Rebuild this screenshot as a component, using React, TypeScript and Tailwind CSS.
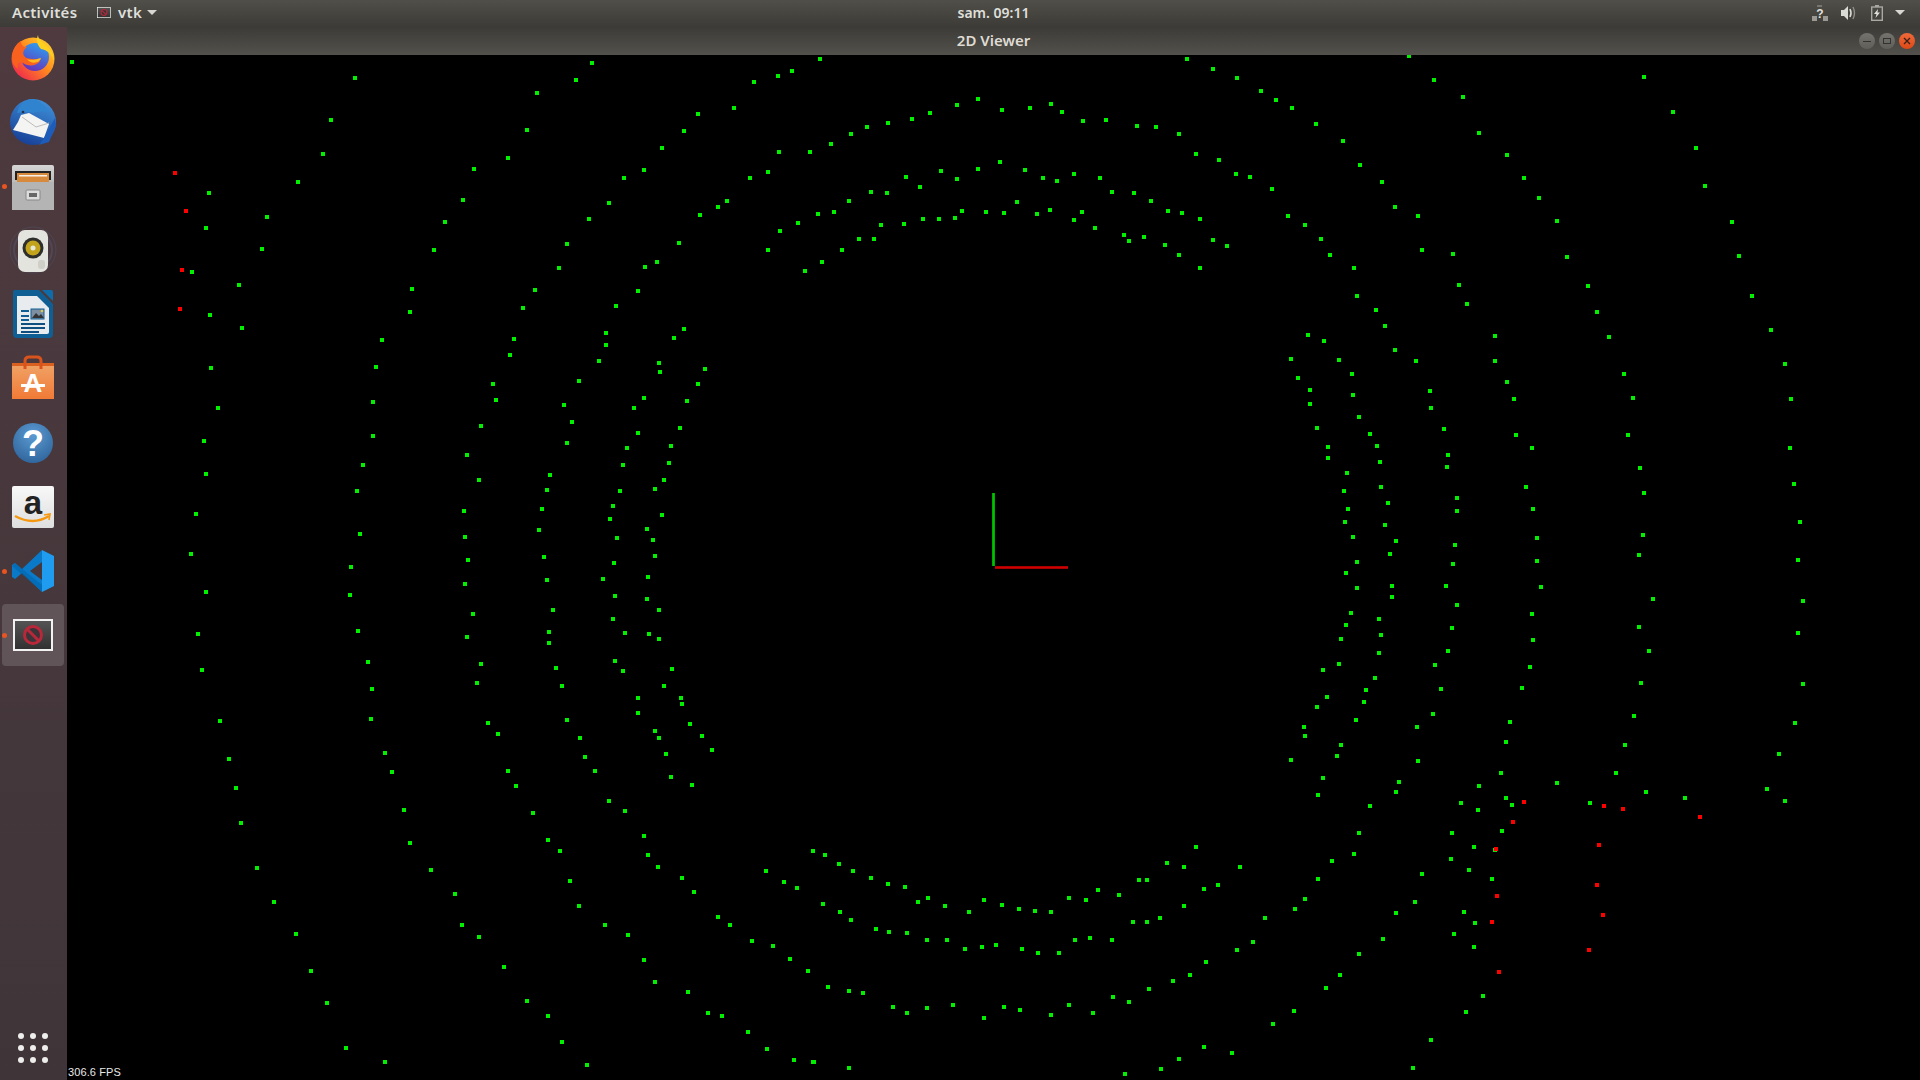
type Pt = [number, number]

// point lists were read off crops of the capture, each with its own origin and x scale
const crop = (ox: number, oy: number, sx: number, sy: number, pts: Pt[]): Pt[] =>
  pts.map(([x, y]) => [Math.round(ox + x / sx), Math.round(oy + y / sy)])

const GREEN: Pt[] = [
  [72, 62],
  ...crop(160, 50, 2.376, 3, [
    [1026,39],[463,84],[988,90],[895,129],[406,210],[872,240],[387,312],[827,324],[746,357],[328,396],[116,429],[720,450],[254,501],[677,516],[109,534],[242,597],[651,600],[76,666],[187,705],[598,717],[119,795],[594,786],[195,834],[527,870],[121,954],[513,951],[138,1074],[506,1056],[506,1158],[104,1173],[482,1245],[109,1272],[468,1323],[85,1392],[475,1452],[73,1512],
    [1568,27],[1501,63],[1468,78],[1411,96],[1363,174],[1278,192],[1245,243],[1192,294],[1470,306],[1544,306],[1150,360],[1444,366],[1102,384],[1401,384],[1066,459],[1347,453],[1325,471],[1283,495],[1563,492],[1019,507],[1515,519],[1473,543],[967,582],[1233,579],[1444,600],[948,654],[1181,636],[1152,651],[1532,663],[891,720],[1135,723],[862,774],[1083,768],[1059,849],[1245,837],[1221,864],[841,867],[1059,885],[831,915],[1043,933],[1185,939],[1188,966],[1295,957],[791,1002],[995,993],[1278,1002],[798,1050],[1150,1044],[1252,1054],[1126,1074],[960,1065],[979,1116],[762,1128],[1135,1149],[1235,1134],[967,1179],[1109,1194],[1214,1188],[729,1215],[1100,1245],[1209,1239],[926,1275],[758,1290],[1197,1290],[919,1320],[1093,1323],[1176,1317],[722,1383],[907,1377],[1076,1368],[1192,1395],[1069,1407],[724,1461],[900,1440],[1157,1437],[1085,1464],[1171,1470],[912,1521],[1176,1518],
  ]),
  ...crop(160, 560, 2.376, 3, [
    [454,21],[731,1],[1078,9],[1159,51],[919,60],[1052,57],[724,72],[109,96],[451,105],[1081,108],[1157,117],[743,162],[933,150],[1185,150],[1076,177],[90,222],[470,213],[924,216],[1104,219],[1161,222],[1185,237],[729,231],[924,249],[494,306],[1081,303],[100,330],[762,312],[941,324],[1100,333],[1216,327],[503,387],[753,369],[955,378],[1197,378],[1135,414],[1238,414],[1240,432],[1135,459],[501,477],[142,483],[779,489],[967,480],[1259,492],[803,522],[998,534],[1176,513],[1185,534],[1287,528],[534,579],[164,597],[1009,591],[1202,582],[1311,570],[551,636],[828,633],[1033,633],[1214,651],[180,684],[846,678],[1264,675],[1066,723],[579,750],[886,759],[1104,753],[192,789],[922,840],[594,849],[1150,828],[950,873],[1159,885],[1551,873],[230,924],[644,930],[1183,921],[1439,933],[1240,954],[974,963],[1482,966],[1513,984],[1268,996],[701,1002],[271,1026],[995,1038],[1325,1071],[717,1095],[1057,1095],[1354,1095],[323,1122],[758,1131],[1112,1125],[1406,1143],[1456,1158],[1150,1200],[1496,1197],[358,1233],[817,1221],[1539,1233],[1176,1266],[1254,1296],[397,1329],[872,1323],[1302,1359],[922,1368],[1335,1368],[1397,1416],[442,1464],[955,1446],[1442,1467],[534,1506],[1014,1515],[1506,1500],[1553,1506],
  ]),
  ...crop(820, 50, 3, 3, [
    [1101,27],[1179,57],[1251,84],[1323,123],[474,147],[411,165],[330,189],[276,207],[204,219],[141,231],[93,252],[33,282],[546,180],[630,174],[693,162],[726,186],[789,213],[858,210],[951,228],[1008,231],[1077,252],[1128,312],[1197,330],[1248,372],[1290,381],[540,336],[474,357],[363,363],[258,381],[411,387],[300,411],[153,426],[201,429],[87,453],[42,486],[615,360],[669,384],[711,393],[762,372],[840,384],[876,426],[942,429],[993,453],[1044,483],[1086,489],[1140,507],[1179,570],[1221,588],[591,456],[426,483],[498,486],[552,489],[651,492],[690,480],[786,486],[762,510],[825,534],[912,555],[927,573],[972,561],[1035,585],[1077,615],[1140,654],[405,504],[357,507],[309,507],[252,522],[183,525],[117,567],[162,567],[66,600],[6,636],
  ]),
  ...crop(1270, 50, 2.8, 3, [
    [389,18],[459,90],[1047,81],[16,150],[61,174],[540,141],[1128,186],[128,222],[585,249],[204,273],[1192,294],[252,345],[663,315],[711,384],[313,396],[5,417],[1217,408],[753,444],[350,471],[50,498],[414,498],[97,525],[803,513],[1293,516],[142,567],[425,600],[168,615],[512,612],[831,621],[1313,618],[235,654],[529,705],[890,708],[243,738],[1349,738],[551,762],[296,780],[915,786],[322,828],[106,855],[630,858],[151,873],[949,861],[1402,840],[350,900],[58,927],[193,930],[408,933],[630,933],[1442,942],[78,984],[229,972],[991,972],[663,996],[112,1020],[448,1023],[232,1035],[683,1047],[1016,1044],[1458,1047],[112,1062],[450,1074],[249,1101],[131,1134],[487,1137],[280,1152],[688,1155],[1002,1155],[299,1188],[162,1191],[733,1194],[1456,1194],[162,1224],[498,1215],[308,1236],[495,1251],[1036,1254],[215,1269],[1467,1302],[310,1311],[716,1311],[207,1323],[1047,1329],[523,1344],[330,1359],[218,1377],[523,1383],[736,1377],[209,1416],[322,1425],[1484,1416],[232,1461],[352,1473],[747,1464],[1044,1455],[518,1485],[336,1512],[1033,1515],
  ]),
  ...crop(1270, 560, 2.8, 3, [
    [243,6],[512,12],[747,3],[1478,0],[212,39],[243,84],[341,78],[492,78],[758,81],[341,111],[1072,117],[1492,123],[523,135],[226,159],[733,162],[305,177],[212,195],[1033,201],[509,204],[310,225],[198,237],[736,240],[1478,219],[305,279],[498,273],[1061,273],[193,312],[148,330],[462,315],[728,321],[294,354],[1038,369],[1492,372],[268,390],[478,387],[705,384],[159,411],[263,426],[131,441],[456,462],[1019,468],[240,480],[672,486],[1470,489],[95,501],[411,501],[97,528],[660,546],[994,555],[198,555],[187,588],[58,600],[414,603],[1425,582],[646,639],[968,639],[148,654],[361,666],[585,678],[803,669],[352,696],[1052,696],[134,705],[1391,687],[660,714],[1162,714],[280,738],[534,729],[677,735],[896,729],[1442,723],[582,750],[249,819],[509,819],[649,813],[235,882],[571,861],[630,870],[173,903],[506,897],[134,957],[425,942],[557,930],[621,957],[97,1017],[406,1026],[70,1047],[352,1059],[543,1056],[574,1089],[316,1137],[515,1122],[571,1161],[249,1182],[196,1245],[156,1284],[67,1353],[8,1392],[596,1308],[548,1356],[450,1440],[400,1524],
  ]),
  ...crop(0, 0, 1568 / 1920, 882 / 1080, [
    [674,698],[685,706],[697,711],[711,717],[725,722],[739,724],[750,737],[758,733],[772,740],[791,745],[804,735],[818,739],[832,742],[845,744],[858,745],[873,733],[887,735],[897,727],[914,731],[930,719],[937,719],[953,705],[967,708],[977,692],[983,726],[995,723],[1013,708],[967,740],[947,750],[937,753],[925,753],[908,768],[890,766],[878,768],[865,778],[848,778],[835,775],[813,772],[802,773],[788,775],[773,768],[757,768],[741,762],[726,761],[715,759],[695,751],[686,745],[672,738],
    [1033,750],[1023,769],[1010,776],[985,786],[972,796],[958,801],[938,808],[922,818],[909,814],[893,827],[873,821],[858,829],[833,825],[820,822],[804,831],[778,821],[757,823],[741,827],[729,822],[705,811],[693,809],[676,806],
    [1006,860],[983,855],[963,865],[948,873],[919,877],[693,872],[664,867],
  ]),
]

const RED: Pt[] = [
  ...crop(160, 50, 2.376, 3, [[36,369],[62,483],[52,660],[47,777]]),
  ...crop(1270, 560, 2.8, 3, [[711,726],[935,738],[988,747],[1204,771],[680,786],[921,855],[632,867],[915,975],[635,1008],[932,1065],[621,1086],[893,1170],[641,1236]]),
]

function VtkGlyph({ className }: { className: string }) {
  return (
    <svg viewBox="0 0 40 32" className={className}>
      <defs>
        <linearGradient id="vtk-bg" x1="0" y1="0" x2="0" y2="1">
          <stop offset="0" stopColor="#555555" />
          <stop offset="1" stopColor="#303030" />
        </linearGradient>
      </defs>
      <rect x="1" y="1" width="38" height="30" fill="url(#vtk-bg)" stroke="#f2f2f2" strokeWidth="2" />
      <circle cx="20" cy="16" r="8.5" fill="#3c3438" stroke="#b8283a" strokeWidth="3" />
      <path d="M14.5 10.5 L25.5 21.5" stroke="#b8283a" strokeWidth="3" />
    </svg>
  )
}

function Firefox() {
  return (
    <svg viewBox="0 0 48 48" className="h-12 w-12">
      <defs>
        <linearGradient id="ff-ring" x1="0.9" y1="0.1" x2="0.1" y2="0.9">
          <stop offset="0" stopColor="#ffd02c" />
          <stop offset="0.45" stopColor="#ff8a1e" />
          <stop offset="1" stopColor="#f0274f" />
        </linearGradient>
        <linearGradient id="ff-blue" x1="0.7" y1="0" x2="0.3" y2="1">
          <stop offset="0" stopColor="#2aa0f0" />
          <stop offset="1" stopColor="#6a2fb8" />
        </linearGradient>
      </defs>
      <circle cx="24" cy="25" r="21.5" fill="url(#ff-ring)" />
      <circle cx="26" cy="23" r="14" fill="url(#ff-blue)" />
      <path d="M3 24 C3 15 8 9 12 7 C12 11 14 13 18 13 C14 16 13 20 16 23 C20 26 27 24 31 27 C28 32 19 33 14 29 C9 26 8 30 9 35 C5 32 3 29 3 24 Z" fill="#f9611f" />
      <path d="M29 1 C29 9 45 12 45 27 C43 20 38 16 32 15 C28 11 27 6 29 1 Z" fill="#ffcf20" />
      <path d="M18 25 C22 27 28 25 32 24 C31 29 22 31 18 25 Z" fill="#ffb81e" />
    </svg>
  )
}

function Thunderbird() {
  return (
    <svg viewBox="0 0 48 48" className="h-12 w-12">
      <defs>
        <linearGradient id="tb-blue" x1="0.7" y1="0" x2="0.3" y2="1">
          <stop offset="0" stopColor="#3f8fd8" />
          <stop offset="1" stopColor="#163f96" />
        </linearGradient>
      </defs>
      <circle cx="24" cy="24" r="23" fill="url(#tb-blue)" />
      <path d="M8 15 C10 6 18 0 24 1 C30 2 36 7 40 15 C34 12 28 14 24 15 C18 13 12 15 8 15 Z" fill="#2f83cf" />
      <path d="M12 17 L20 15 L40 26 L35 40 L4 32 L9 24 Z" fill="#f4f4f2" />
      <path d="M13 19 L27 29 L40 25" fill="none" stroke="#bcbcbc" strokeWidth="1" />
      <circle cx="14" cy="14" r="1.3" fill="#20304a" />
      <path d="M35 40 L46 20 L47 28 L40 44 L30 47 Z" fill="#1d5cb8" />
    </svg>
  )
}

function Files() {
  return (
    <svg viewBox="0 0 48 48" className="h-12 w-12">
      <defs>
        <linearGradient id="fl-body" x1="0" y1="0" x2="0" y2="1">
          <stop offset="0" stopColor="#d6d6d6" />
          <stop offset="1" stopColor="#8f8f8f" />
        </linearGradient>
      </defs>
      <rect x="3" y="3" width="42" height="45" rx="2" fill="url(#fl-body)" />
      <rect x="6" y="9" width="36" height="9" fill="#222" />
      <rect x="8" y="11" width="32" height="9" fill="#d88a3c" />
      <rect x="10" y="13" width="28" height="1.5" fill="#f6f0e6" />
      <rect x="3" y="20" width="42" height="28" fill="#b4b4b4" />
      <rect x="17" y="28" width="14" height="10" rx="1" fill="#dcdcdc" stroke="#888" />
      <rect x="20" y="31" width="8" height="4" fill="#666" />
    </svg>
  )
}

function Rhythmbox() {
  return (
    <svg viewBox="0 0 48 48" className="h-12 w-12">
      <circle cx="24" cy="24" r="23" fill="none" stroke="#5a6a8a" strokeOpacity="0.25" strokeWidth="1" />
      <circle cx="24" cy="24" r="19" fill="none" stroke="#5a6a8a" strokeOpacity="0.3" strokeWidth="2" />
      <rect x="9" y="4" width="30" height="42" rx="7" fill="#e4e4de" />
      <circle cx="24" cy="22" r="10.5" fill="#2e2e2a" />
      <circle cx="24" cy="22" r="7.5" fill="#c2a41c" />
      <circle cx="24" cy="22" r="2.5" fill="#e8e8d8" />
      <rect x="29" y="34" width="7" height="9" rx="3" fill="#cfcfc8" />
    </svg>
  )
}

function Writer() {
  return (
    <svg viewBox="0 0 48 48" className="h-12 w-12">
      <path d="M6 0 H30 L44 14 V44 Q44 48 40 48 H8 Q4 48 4 44 V2 Q4 0 6 0 Z" fill="#0f5f94" />
      <path d="M33 0 H42 Q44 0 44 2 V11 Z" fill="#0f6cab" />
      <path d="M8 6 H28 L40 18 V42 Q40 44 38 44 H8 Z" fill="#e8ecef" />
      <rect x="12" y="20" width="8" height="2" fill="#0f5f94" />
      <rect x="12" y="25" width="8" height="2" fill="#0f5f94" />
      <rect x="12" y="29" width="8" height="2" fill="#0f5f94" />
      <rect x="22" y="19" width="13" height="10" fill="#7d8fa0" stroke="#0f5f94" />
      <path d="M23 28 L27 23 L30 26 L32 24 L35 28 Z" fill="#333" />
      <circle cx="33" cy="21" r="1.3" fill="#e4c84a" />
      <rect x="12" y="33" width="24" height="2" fill="#0f4f80" />
      <rect x="12" y="37" width="24" height="2" fill="#0f4f80" />
      <rect x="12" y="41" width="18" height="2" fill="#0f4f80" />
    </svg>
  )
}

function Software() {
  return (
    <svg viewBox="0 0 48 48" className="h-12 w-12">
      <defs>
        <linearGradient id="sw-bag" x1="0" y1="0" x2="0" y2="1">
          <stop offset="0" stopColor="#efa468" />
          <stop offset="1" stopColor="#f17a36" />
        </linearGradient>
      </defs>
      <path d="M3 9 H45 V45 H3 Z" fill="url(#sw-bag)" />
      <path d="M3 9 H45 L45 12 H3 Z" fill="#d9601f" />
      <path d="M16 15 V7 Q16 3 20 3 H28 Q32 3 32 7 V15" fill="none" stroke="#d9531c" strokeWidth="3" />
      <text x="24" y="38" textAnchor="middle" className="fill-white font-['Liberation_Sans',sans-serif] text-[26px] font-bold">A</text>
      <rect x="12" y="30" width="24" height="3" fill="#fff" />
    </svg>
  )
}

function HelpIcon() {
  return (
    <svg viewBox="0 0 48 48" className="h-12 w-12">
      <defs>
        <radialGradient id="hp-blue" cx="0.5" cy="0.3" r="0.8">
          <stop offset="0" stopColor="#5c9bd2" />
          <stop offset="1" stopColor="#2a5f96" />
        </radialGradient>
      </defs>
      <circle cx="24" cy="24" r="20" fill="url(#hp-blue)" />
      <text x="24" y="37" textAnchor="middle" className="fill-white font-['Liberation_Sans',sans-serif] text-[36px] font-bold">?</text>
    </svg>
  )
}

function Amazon() {
  return (
    <svg viewBox="0 0 48 48" className="h-12 w-12">
      <defs>
        <linearGradient id="az-bg" x1="0" y1="0" x2="0" y2="1">
          <stop offset="0" stopColor="#f8f8f8" />
          <stop offset="1" stopColor="#dedede" />
        </linearGradient>
      </defs>
      <rect x="3" y="3" width="42" height="42" rx="2" fill="url(#az-bg)" />
      <text x="24" y="31" textAnchor="middle" className="fill-[#222] font-['Liberation_Sans',sans-serif] text-[33px] font-bold">a</text>
      <path d="M6 33 Q24 43 40 33" fill="none" stroke="#f5980f" strokeWidth="2.4" />
      <path d="M35 32 L41 31 L40 37" fill="none" stroke="#f5980f" strokeWidth="1.6" />
    </svg>
  )
}

function VSCode() {
  return (
    <svg viewBox="0 0 48 48" className="h-12 w-12">
      <path d="M33 3 L13 22 L6 16 L3 18 V30 L6 32 L13 26 L33 45 L33 33 L21 24 L33 15 Z" fill="#0a79c8" />
      <path d="M3 19 L6 16 L33 38 V45 L30 42 Z" fill="#0065a9" opacity="0.55" />
      <path d="M33 3 L45 9 V39 L33 45 Z" fill="#1f9cf0" />
    </svg>
  )
}

function DockItem({ running, active, children }: { running?: boolean; active?: boolean; children: React.ReactNode }) {
  return (
    <div className={`relative ml-[2px] mr-[3px] flex h-[62px] items-center justify-center rounded-[4px] ${active ? 'bg-white/15' : ''}`}>
      {running && <span className="absolute left-[0px] top-[29px] h-[5px] w-[5px] rounded-full bg-[#e95420]" />}
      {children}
    </div>
  )
}

function Dock() {
  return (
    <nav className="flex w-[67px] shrink-0 flex-col gap-[2px] bg-gradient-to-b from-[#4e3a3f] to-[#3f3539] pb-[1px]">
      <DockItem><Firefox /></DockItem>
      <DockItem><Thunderbird /></DockItem>
      <DockItem running><Files /></DockItem>
      <DockItem><Rhythmbox /></DockItem>
      <DockItem><Writer /></DockItem>
      <DockItem><Software /></DockItem>
      <div className="pt-[1px]"><DockItem><HelpIcon /></DockItem></div>
      <DockItem><Amazon /></DockItem>
      <DockItem running><VSCode /></DockItem>
      <DockItem running active><VtkGlyph className="h-8 w-10" /></DockItem>
      <div className="mt-auto flex h-[62px] items-center justify-center pr-[1px]">
        <div className="grid grid-cols-3 gap-[6px]">
          {Array.from({ length: 9 }, (_, i) => (
            <span key={i} className="h-[6px] w-[6px] rounded-full bg-[#eeeeec]" />
          ))}
        </div>
      </div>
    </nav>
  )
}

function Caret() {
  return (
    <svg viewBox="0 0 10 5" className="h-[5px] w-[10px]">
      <path d="M0 0 H10 L5 5 Z" fill="#d8d7d2" />
    </svg>
  )
}

function TopBar() {
  return (
    <header className="flex h-[27px] shrink-0 items-center bg-gradient-to-b from-[#504f49] to-[#3c3b37] pb-[2px] font-['Noto_Sans',sans-serif] text-[14px] font-medium text-[#dfdfda]">
      <div className="flex w-[200px] items-center pl-3">
        <span className="w-[85px] text-[15px] font-semibold tracking-[0.3px]">Activités</span>
        <VtkGlyph className="h-[11px] w-[14px]" />
        <span className="ml-[7px] text-[15px] font-semibold tracking-[0.3px]">vtk</span>
        <span className="ml-[5px]"><Caret /></span>
      </div>
      <div className="flex-1 text-center font-semibold">sam. 09:11</div>
      <div className="flex w-[133px] items-center justify-end gap-[12px] pr-[15px]">
        <svg viewBox="0 0 16 16" className="h-4 w-4">
          <rect x="0" y="11" width="5" height="5" fill="#9a9994" />
          <rect x="11" y="11" width="5" height="5" fill="#9a9994" />
          <rect x="5" y="0" width="5" height="2" fill="#77766f" />
          <text x="8" y="13" textAnchor="middle" className="fill-[#e0e0dc] font-['Liberation_Sans',sans-serif] text-[12px] font-bold">?</text>
        </svg>
        <svg viewBox="0 0 16 16" className="mr-[3px] h-4 w-4">
          <path d="M1 5 H4 L8 1 V15 L4 11 H1 Z" fill="#dcdcd7" />
          <path d="M10 4 Q12 8 10 12" fill="none" stroke="#dcdcd7" strokeWidth="1.6" />
          <path d="M13 2 Q16 8 13 14" fill="none" stroke="#8f8e88" strokeWidth="1.4" />
        </svg>
        <svg viewBox="0 0 12 16" className="h-4 w-3">
          <rect x="4" y="0" width="4" height="2" fill="#a9a8a2" />
          <rect x="0.7" y="2" width="10.6" height="13.3" fill="none" stroke="#a9a8a2" strokeWidth="1.4" />
          <path d="M7 4 L3 9 H5.5 L4.5 13 L9 7.5 H6.5 Z" fill="#e0e0dc" />
        </svg>
        <Caret />
      </div>
    </header>
  )
}

function WindowButton({ close, children }: { close?: boolean; children: React.ReactNode }) {
  return (
    <span
      className={`flex h-4 w-4 items-center justify-center rounded-full ${
        close ? 'bg-gradient-to-b from-[#f0693a] to-[#dd4814]' : 'bg-gradient-to-b from-[#74736d] to-[#5f5e58]'
      }`}
    >
      {children}
    </span>
  )
}

function TitleBar() {
  return (
    <div className="grid h-[28px] shrink-0 grid-cols-[1fr_auto_1fr] items-center bg-gradient-to-b from-[#3c3b37] to-[#52514c] pb-[1px] font-['Noto_Sans',sans-serif] text-[15px] font-semibold text-[#dfdbd2]">
      <span />
      <span>2D Viewer</span>
      <div className="flex justify-end gap-1 pr-[5px] pt-[1px]">
        <WindowButton><span className="h-[1px] w-[8px] bg-[#33322e]" /></WindowButton>
        <WindowButton><span className="h-[6px] w-[8px] border border-[#33322e]" /></WindowButton>
        <WindowButton close>
          <svg viewBox="0 0 8 8" className="h-2 w-2">
            <path d="M1 1 L7 7 M7 1 L1 7" stroke="#3a2016" strokeWidth="1.3" />
          </svg>
        </WindowButton>
      </div>
    </div>
  )
}

function Scatter() {
  return (
    <svg viewBox="67 55 1853 1025" className="block h-full w-full" shapeRendering="crispEdges">
      {GREEN.map(([x, y], i) => (
        <rect key={i} x={x - 2} y={y - 2} width="4" height="4" fill="#00f000" />
      ))}
      {RED.map(([x, y], i) => (
        <rect key={i} x={x - 2} y={y - 2} width="4" height="4" fill="#ff0000" />
      ))}
      <rect x="992" y="493" width="3" height="73" fill="#00a800" />
      <rect x="993" y="493" width="1" height="73" fill="#00c400" />
      <rect x="995" y="566" width="73" height="3" fill="#a80000" />
      <rect x="995" y="567" width="73" height="1" fill="#d00000" />
    </svg>
  )
}

export default function App() {
  return (
    <div className="flex h-screen w-screen flex-col overflow-hidden bg-black">
      <TopBar />
      <div className="flex min-h-0 flex-1">
        <Dock />
        <main className="flex min-w-0 flex-1 flex-col">
          <TitleBar />
          <div className="relative min-h-0 flex-1 bg-black">
            <Scatter />
            <span className="absolute bottom-0 left-[1px] font-['Liberation_Sans',sans-serif] text-[11px] leading-[16px] tracking-[0.1px] text-[#e8e8e8]">
              306.6 FPS
            </span>
          </div>
        </main>
      </div>
    </div>
  )
}
